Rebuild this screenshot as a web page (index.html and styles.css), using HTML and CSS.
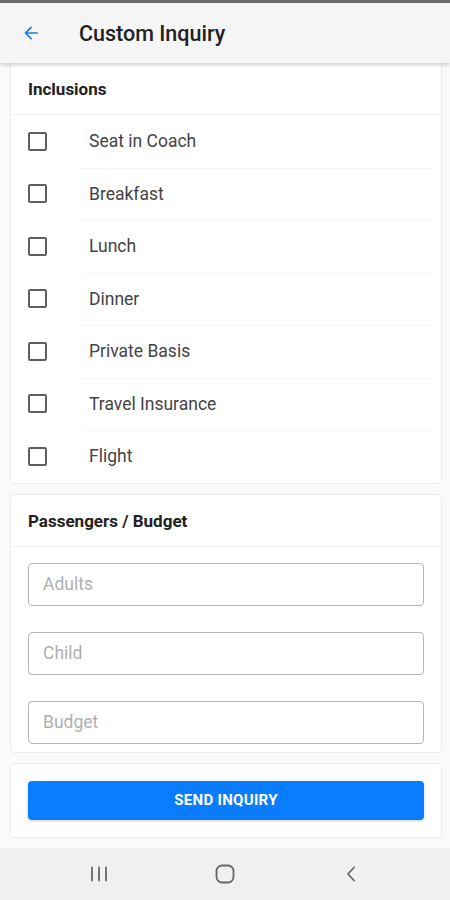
FILE: index.html
```html
<!DOCTYPE html>
<html lang="en">
<head>
    <meta charset="UTF-8">
    <meta name="viewport" content="width=device-width, initial-scale=1.0">
    <title>Custom Inquiry</title>
    <link rel="stylesheet" href="styles.css">
</head>
<body>

<div class="statusLine"></div>

<!-- Top App Bar -->
<header class="appBar">
    <svg class="backIcon" width="20" height="20" viewBox="0 0 24 24">
        <path d="M20 11H7.83l5.59-5.59L12 4l-8 8 8 8 1.41-1.41L7.83 13H20v-2z" fill="#1e7be6"/>
    </svg>
    <h1 class="appTitle">Custom Inquiry</h1>
</header>

<main class="content">

    <!-- Inclusions -->
    <section class="card">
        <h2 class="cardTitle">Inclusions</h2>
        <div class="checkList">
            <label class="checkRow"><span class="box"></span><span class="label">Seat in Coach</span></label>
            <label class="checkRow"><span class="box"></span><span class="label">Breakfast</span></label>
            <label class="checkRow"><span class="box"></span><span class="label">Lunch</span></label>
            <label class="checkRow"><span class="box"></span><span class="label">Dinner</span></label>
            <label class="checkRow"><span class="box"></span><span class="label">Private Basis</span></label>
            <label class="checkRow"><span class="box"></span><span class="label">Travel Insurance</span></label>
            <label class="checkRow"><span class="box"></span><span class="label">Flight</span></label>
        </div>
    </section>

    <!-- Passengers / Budget -->
    <section class="card">
        <h2 class="cardTitle">Passengers / Budget</h2>
        <div class="fields">
            <input class="field" type="text" placeholder="Adults">
            <input class="field" type="text" placeholder="Child">
            <input class="field" type="text" placeholder="Budget">
        </div>
    </section>

    <!-- Submit -->
    <section class="card sendCard">
        <button class="sendBtn">SEND INQUIRY</button>
    </section>

</main>

<!-- System Navigation -->
<nav class="navBar">
    <svg class="navIcon" width="20" height="20" viewBox="0 0 20 20">
        <path d="M3 3.5v13M10 3.5v13M17 3.5v13" stroke="#666" stroke-width="1.8" stroke-linecap="round"/>
    </svg>
    <svg class="navIcon" width="20" height="20" viewBox="0 0 20 20">
        <rect x="1.5" y="1.5" width="17" height="17" rx="5.5" fill="none" stroke="#666" stroke-width="1.8"/>
    </svg>
    <svg class="navIcon" width="20" height="20" viewBox="0 0 20 20">
        <path d="M13 3.5L7 10l6 6.5" fill="none" stroke="#666" stroke-width="1.8" stroke-linecap="round" stroke-linejoin="round"/>
    </svg>
</nav>

</body>
</html>
```

FILE: styles.css
```css
/* Basic Reset */
* {
    margin: 0;
    padding: 0;
    box-sizing: border-box;
}

body {
    font-family: Roboto, "Noto Sans", sans-serif;
    background-color: #fafafa;
    color: #222;
    width: 450px;
    height: 900px;
    overflow: hidden;
    display: flex;
    flex-direction: column;
}

.statusLine {
    height: 3px;
    background-color: #6a6a6a;
}

/* App Bar */
.appBar {
    height: 60px;
    background-color: #f5f5f5;
    display: flex;
    align-items: center;
    padding-left: 21px;
    box-shadow: 0 2px 4px rgba(0, 0, 0, 0.18);
    position: relative;
    z-index: 2;
}

.backIcon {
    margin-right: 38px;
}

.appTitle {
    font-size: 21.5px;
    font-weight: 500;
    color: #222;
}

/* Content */
.content {
    flex: 1;
    display: flex;
    flex-direction: column;
    gap: 10px;
    padding: 0 8px 9px 10px;
}

.card {
    background-color: #fff;
    border: 1px solid #ececec;
    border-radius: 4px;
}

.card:first-child {
    border-top: none;
    border-top-left-radius: 0;
    border-top-right-radius: 0;
}

.cardTitle {
    height: 52px;
    line-height: 52px;
    padding-left: 17px;
    font-size: 17px;
    font-weight: 700;
    color: #222;
    border-bottom: 1px solid #efefef;
}

/* Checkbox Rows */
.checkRow {
    height: 52.5px;
    display: flex;
    align-items: center;
    padding-left: 17px;
    position: relative;
}

.checkRow + .checkRow::before {
    content: "";
    position: absolute;
    top: 0;
    left: 70px;
    right: 8px;
    border-top: 1px solid #f4f4f4;
}

.box {
    width: 19px;
    height: 19px;
    border: 2px solid #5f5f5f;
    border-radius: 2px;
    margin-right: 42px;
}

.label {
    font-size: 17.5px;
    color: #444;
}

/* Inputs */
.fields {
    display: flex;
    flex-direction: column;
    gap: 26px;
    padding: 16px 17px 8px 17px;
}

.field {
    height: 43px;
    border: 1px solid #b5b5b5;
    border-radius: 4px;
    padding: 0 14px;
    font-family: Roboto, "Noto Sans", sans-serif;
    font-size: 17.5px;
    color: #333;
    background-color: #fff;
}

.field::placeholder {
    color: #b0b0b0;
}

/* Send Button */
.sendCard {
    padding: 17px;
}

.sendBtn {
    width: 100%;
    height: 39px;
    background-color: #0a7cff;
    color: #fff;
    border: none;
    border-radius: 4px;
    font-family: Roboto, "Noto Sans", sans-serif;
    font-size: 15px;
    font-weight: 700;
    letter-spacing: 0.3px;
    box-shadow: 0 1px 3px rgba(0, 0, 0, 0.2);
}

/* Navigation Bar */
.navBar {
    height: 52px;
    background-color: #f0f0f0;
    display: flex;
    align-items: center;
    justify-content: center;
    gap: 106px;
}
```
